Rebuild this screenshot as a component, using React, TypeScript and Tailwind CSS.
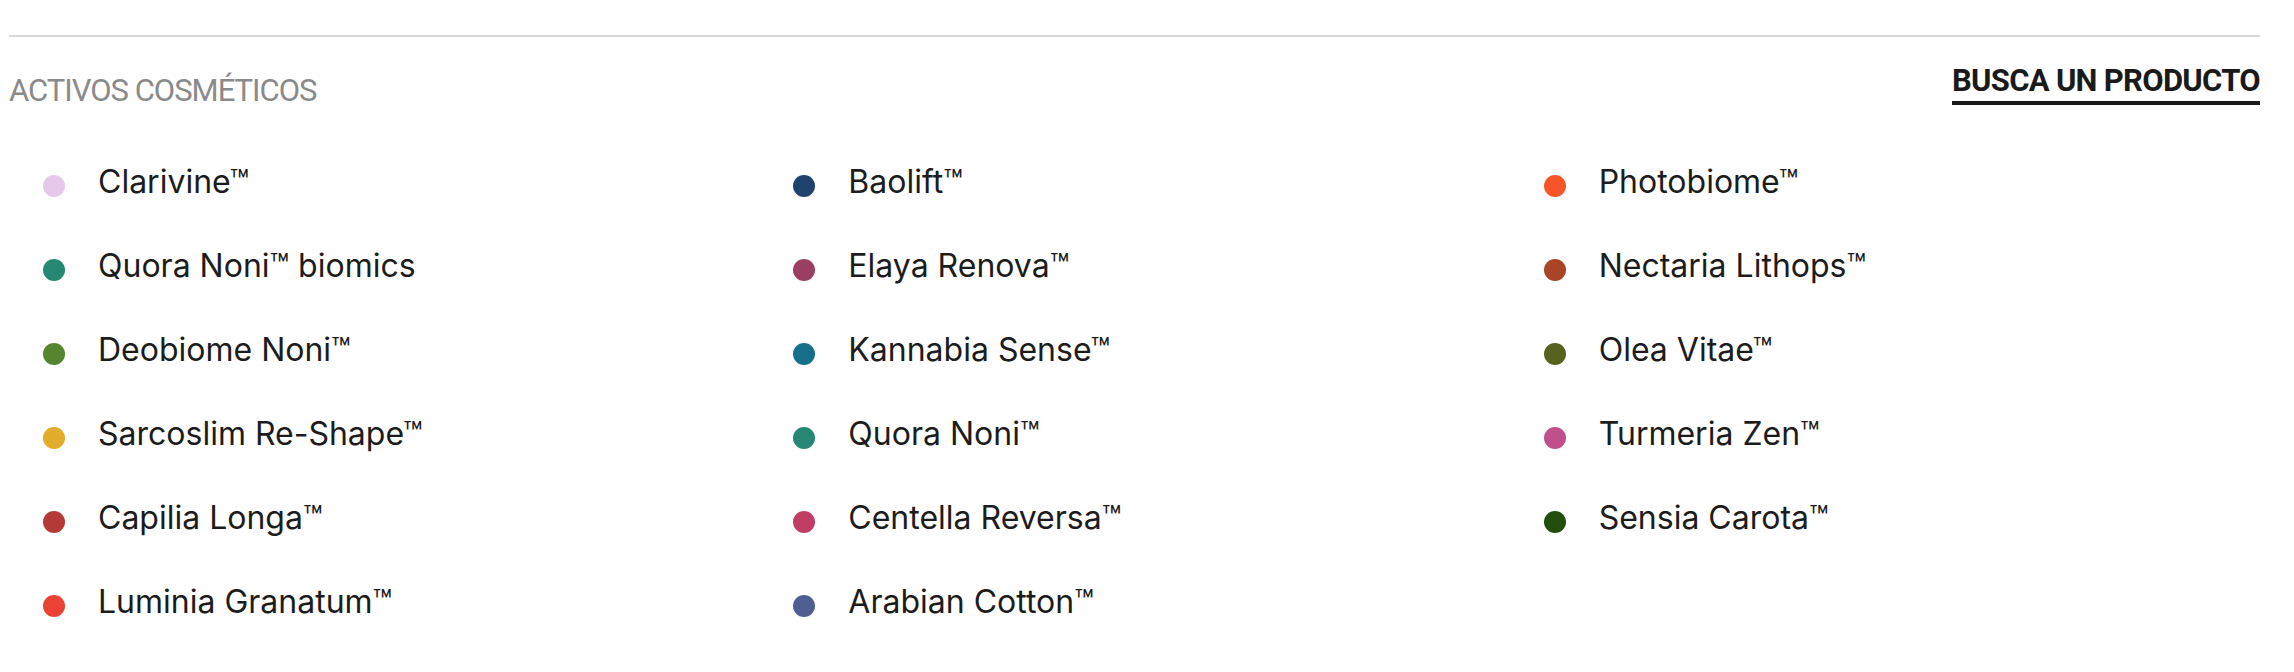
import React from "react";

type Item = { name: string; color: string };

const items: Item[] = [
  { name: "Clarivine™", color: "#e6c8ea" },
  { name: "Quora Noni™ biomics", color: "#268772" },
  { name: "Deobiome Noni™", color: "#55862f" },
  { name: "Sarcoslim Re-Shape™", color: "#e2ad2a" },
  { name: "Capilia Longa™", color: "#b33a36" },
  { name: "Luminia Granatum™", color: "#ea4335" },
  { name: "Baolift™", color: "#1f436c" },
  { name: "Elaya Renova™", color: "#9b3f62" },
  { name: "Kannabia Sense™", color: "#16708a" },
  { name: "Quora Noni™", color: "#268772" },
  { name: "Centella Reversa™", color: "#c03d64" },
  { name: "Arabian Cotton™", color: "#4f5f92" },
  { name: "Photobiome™", color: "#f65527" },
  { name: "Nectaria Lithops™", color: "#a94426" },
  { name: "Olea Vitae™", color: "#58621f" },
  { name: "Turmeria Zen™", color: "#c0508a" },
  { name: "Sensia Carota™", color: "#224f0d" },
];

export default function App() {
  return (
    <div className="w-[2294px] h-[672px] bg-white overflow-hidden">
      <div className="ml-[9px] w-[2251px] pt-[35px]">
        <div className="h-[2px] bg-[#d9d9d9]" />
        <div className="flex justify-between items-start">
          <div
            className="mt-[38px] text-[31px] leading-none tracking-[-1px] text-[#8a8a8a] uppercase"
            style={{ fontFamily: "Roboto, 'Liberation Sans', sans-serif" }}
          >
            ACTIVOS COSMÉTICOS
          </div>
          <a
            className="mt-[28px] pb-[5px] border-b-4 border-[#1a1a1a] text-[31px] leading-none tracking-[-0.7px] font-bold text-[#1a1a1a] uppercase"
            style={{ fontFamily: "Roboto, 'Liberation Sans', sans-serif" }}
          >
            BUSCA UN PRODUCTO
          </a>
        </div>
        <div className="mt-[38px] grid grid-cols-3 grid-rows-6 grid-flow-col">
          {items.map((it) => (
            <div key={it.name} className="h-[84px] flex items-center pl-[34px] gap-[33px]">
              <span
                className="w-[22px] h-[22px] rounded-full shrink-0"
                style={{ backgroundColor: it.color }}
              />
              <span
                className="pb-[8px] text-[32px] text-[#1c1c1c] leading-[40px]"
                style={{ fontFamily: "Inter, 'Noto Sans', sans-serif" }}
              >
                {it.name}
              </span>
            </div>
          ))}
        </div>
      </div>
    </div>
  );
}
